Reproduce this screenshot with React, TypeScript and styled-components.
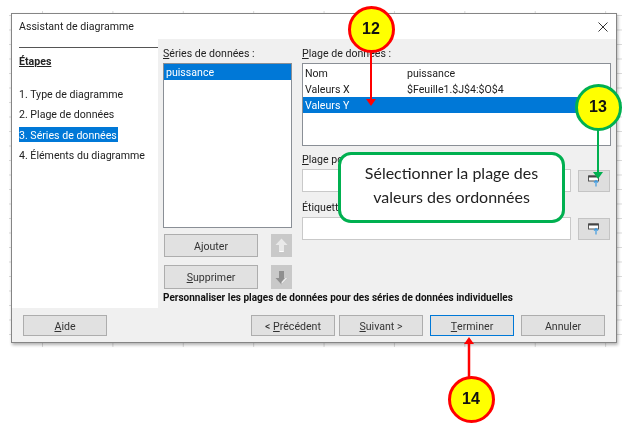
import React from "react";
import styled, { createGlobalStyle } from "styled-components";

const GlobalStyle = createGlobalStyle`
	html, body {
		margin: 0;
		padding: 0;
		background: #fff;
	}
`;

const Page = styled.div`
	position: relative;
	width: 630px;
	height: 427px;
	overflow: hidden;
	background: #fff;
	font-family: Roboto, "Noto Sans", sans-serif;
	font-size: 10.6px;
	color: #222;
	filter: blur(0.35px);
`;

const Sheet = styled.div`
	width: 613px;
	height: 336px;
	margin: 11px 0 0 9px;
	padding: 2px 5px 4px 2px;
	box-sizing: border-box;
	background-color: #fff;
	background-image: linear-gradient(#d9d9d9 1px, transparent 1px), linear-gradient(90deg, #d9d9d9 1px, transparent 1px);
	background-size: 100% 14.5px, 70.4px 100%;
	background-position: 0 4px, 33px 0;
`;

const Dialog = styled.div`
	display: flex;
	flex-direction: column;
	height: 330px;
	box-sizing: border-box;
	border: 1px solid #858585;
	box-shadow: 1px 2px 3px rgba(0, 0, 0, 0.3);
	background: #fff;
`;

const TitleBar = styled.div`
	display: flex;
	align-items: center;
	justify-content: space-between;
	height: 25px;
	padding: 0 8px 0 7px;
	box-sizing: border-box;
	flex: none;
`;

const Body = styled.div`
	display: flex;
	height: 269px;
	flex: none;
`;

const Steps = styled.div`
	width: 146px;
	flex: none;
	padding: 8px 0 0 7px;
	box-sizing: border-box;
	background: #fff;
`;

const StepsTitle = styled.div`
	border-top: 1px solid #555;
	padding-top: 5px;
	height: 27px;
	line-height: 18px;
	font-weight: 700;
	text-decoration: underline;
`;

const Step = styled.div<{ $active?: boolean }>`
	width: fit-content;
	height: 15px;
	line-height: 17px;
	margin-top: 5.5px;
	padding-right: 1px;
	background: ${(p) => (p.$active ? "#0078d7" : "transparent")};
	color: ${(p) => (p.$active ? "#fff" : "#222")};
	&:first-of-type {
		margin-top: 8px;
	}
`;

const Main = styled.div`
	flex: 1;
	padding: 6px 5px 0 5px;
	box-sizing: border-box;
	background: #f0f0f0;
`;

const Columns = styled.div`
	display: grid;
	grid-template-columns: 129px 309px;
	column-gap: 10px;
`;

const Column = styled.div`
	display: flex;
	flex-direction: column;
`;

const FieldLabel = styled.div<{ $gap?: number }>`
	height: 18px;
	line-height: 18px;
	margin-top: ${(p) => p.$gap ?? 0}px;
	white-space: nowrap;
`;

const SeriesList = styled.div`
	height: 165px;
	box-sizing: border-box;
	border: 1px solid #8a8f96;
	background: #fff;
`;

const Row = styled.div<{ $selected?: boolean }>`
	display: flex;
	height: 16px;
	line-height: 18px;
	padding-left: 2px;
	background: ${(p) => (p.$selected ? "#0078d7" : "transparent")};
	color: ${(p) => (p.$selected ? "#fff" : "#222")};
`;

const RangeList = styled.div`
	height: 83px;
	box-sizing: border-box;
	border: 1px solid #8a8f96;
	padding-top: 1px;
	background: #fff;
`;

const NameCell = styled.div`
	width: 102px;
`;

const InputRow = styled.div`
	display: flex;
	align-items: center;
	justify-content: space-between;
	height: 23px;
	padding-right: 1px;
`;

const TextInput = styled.div`
	width: 269px;
	height: 23px;
	box-sizing: border-box;
	border: 1px solid #c9c9c9;
	background: #fff;
`;

const Button = styled.div<{ $width?: number; $focused?: boolean; $lead?: number }>`
	display: flex;
	align-items: center;
	justify-content: center;
	width: ${(p) => p.$width ?? 84}px;
	height: 100%;
	margin-left: ${(p) => p.$lead ?? 0}px;
	padding-top: 1px;
	box-sizing: border-box;
	border: 1px solid ${(p) => (p.$focused ? "#0078d7" : "#adadad")};
	background: #e1e1e1;
	color: #333;
`;

const PickButton = styled(Button)`
	width: 32px;
	height: 22px;
	background: #dedede;
	border-color: #c4c4c4;
`;

const ActionRow = styled.div<{ $height: number; $gap: number }>`
	display: flex;
	justify-content: space-between;
	height: ${(p) => p.$height}px;
	margin-top: ${(p) => p.$gap}px;
	padding-left: 1px;
`;

const MoveButton = styled.div`
	display: flex;
	align-items: center;
	justify-content: center;
	width: 21px;
	height: 100%;
	background: #c9c9c9;
`;

const Hint = styled.div`
	height: 16px;
	line-height: 18px;
	font-size: 10px;
	font-weight: 700;
	color: #111;
	white-space: nowrap;
`;

const Footer = styled.div`
	display: flex;
	justify-content: space-between;
	flex: 1;
	padding: 7px 11px 6px 11px;
	background: #f0f0f0;
`;

const FooterGroup = styled.div`
	display: flex;
	gap: 4px;
`;

const Marker = styled.div<{ $x: number; $y: number; $color: string }>`
	position: absolute;
	left: ${(p) => p.$x - 23.5}px;
	top: ${(p) => p.$y - 23.5}px;
	display: flex;
	align-items: center;
	justify-content: center;
	width: 47px;
	height: 47px;
	box-sizing: border-box;
	border: 3px solid ${(p) => p.$color};
	border-radius: 50%;
	background: #ffff00;
	font-family: "Liberation Sans", Arial, sans-serif;
	font-size: 16px;
	font-weight: 700;
	color: #111;
`;

const Callout = styled.div`
	position: absolute;
	left: 338px;
	top: 152px;
	display: flex;
	align-items: center;
	justify-content: center;
	width: 227px;
	height: 71px;
	padding-bottom: 6px;
	box-sizing: border-box;
	border: 3px solid #00b050;
	border-radius: 13px;
	background: #fff;
	font-family: Lato, "Open Sans", sans-serif;
	font-size: 16px;
	line-height: 24px;
	text-align: center;
	color: #222;
`;

const Arrows = styled.svg`
	position: absolute;
	left: 0;
	top: 0;
`;

const CloseIcon = () => (
	<svg width="10" height="10" viewBox="0 0 10 10">
		<path d="M0.5 0.5 9.5 9.5M9.5 0.5 0.5 9.5" stroke="#333" strokeWidth="1" fill="none" />
	</svg>
);

const UpIcon = () => (
	<svg width="13" height="15" viewBox="0 0 13 15">
		<path d="M6.5 0.5 12.5 7H9V14H4V7H0.5Z" fill="#e9e9e9" />
		<path d="M4.5 13.5H8.5" stroke="#fff" strokeWidth="1" />
	</svg>
);

const DownIcon = () => (
	<svg width="13" height="15" viewBox="0 0 13 15">
		<path d="M6.5 14.5 12.5 8H9V1H4V8H0.5Z" fill="#8f8f8f" />
		<path d="M6.5 14.5 12.5 8H10L6.5 12Z" fill="#e9e9e9" />
	</svg>
);

const PickIcon = () => (
	<svg width="13" height="12" viewBox="0 0 13 12">
		<rect x="0.5" y="1" width="10" height="5" fill="#fff" stroke="#555" strokeWidth="1" />
		<rect x="0.5" y="0.5" width="10" height="2" fill="#444" />
		<path d="M8 11.5V5.5M6 7.5 8 5.5 10 7.5" stroke="#3f9be0" strokeWidth="1.2" fill="none" />
	</svg>
);

const App = () => {
	return (
		<Page>
			<GlobalStyle />
			<Sheet>
				<Dialog>
					<TitleBar>
						<span>Assistant de diagramme</span>
						<CloseIcon />
					</TitleBar>
					<Body>
						<Steps>
							<StepsTitle>Étapes</StepsTitle>
							<Step>1. Type de diagramme</Step>
							<Step>2. Plage de données</Step>
							<Step $active>3. Séries de données</Step>
							<Step>4. Éléments du diagramme</Step>
						</Steps>
						<Main>
							<Columns>
								<Column>
									<FieldLabel><u>S</u>éries de données :</FieldLabel>
									<SeriesList>
										<Row $selected>puissance</Row>
									</SeriesList>
									<ActionRow $height={23} $gap={6}>
										<Button $width={94}>A<u>j</u>outer</Button>
										<MoveButton><UpIcon /></MoveButton>
									</ActionRow>
									<ActionRow $height={24} $gap={8}>
										<Button $width={94}><u>S</u>upprimer</Button>
										<MoveButton><DownIcon /></MoveButton>
									</ActionRow>
								</Column>
								<Column>
									<FieldLabel><u>P</u>lage de données :</FieldLabel>
									<RangeList>
										<Row><NameCell>Nom</NameCell>puissance</Row>
										<Row><NameCell>Valeurs X</NameCell>$Feuille1.$J$4:$O$4</Row>
										<Row $selected><NameCell>Valeurs Y</NameCell></Row>
									</RangeList>
									<FieldLabel $gap={5}><u>P</u>lage po</FieldLabel>
									<InputRow>
										<TextInput />
										<PickButton><PickIcon /></PickButton>
									</InputRow>
									<FieldLabel $gap={7}>Étiquett</FieldLabel>
									<InputRow>
										<TextInput />
										<PickButton><PickIcon /></PickButton>
									</InputRow>
								</Column>
							</Columns>
							<Hint>Personnaliser les plages de données pour des séries de données individuelles</Hint>
						</Main>
					</Body>
					<Footer>
						<Button><u>A</u>ide</Button>
						<FooterGroup>
							<Button>&lt;&nbsp;<u>P</u>récédent</Button>
							<Button><u>S</u>uivant &gt;</Button>
							<Button $focused $lead={3}><u>T</u>erminer</Button>
							<Button $lead={3}>Annuler</Button>
						</FooterGroup>
					</Footer>
				</Dialog>
			</Sheet>
			<Callout>
				<div>Sélectionner la plage des<br />valeurs des ordonnées</div>
			</Callout>
			<Arrows width="630" height="427" viewBox="0 0 630 427">
				<path d="M371 50V100" stroke="#ff0000" strokeWidth="2" fill="none" />
				<path d="M366 99H376L371 106Z" fill="#ff0000" />
				<path d="M598 128V172" stroke="#00b050" strokeWidth="2" fill="none" />
				<path d="M593 172H603L598 179Z" fill="#00b050" />
				<path d="M469 378V343" stroke="#ff0000" strokeWidth="2.5" fill="none" />
				<path d="M464 344H474L469 337Z" fill="#ff0000" />
			</Arrows>
			<Marker $x={371} $y={29} $color="#ff0000">12</Marker>
			<Marker $x={598} $y={107} $color="#00b050">13</Marker>
			<Marker $x={471} $y={399} $color="#ff0000">14</Marker>
		</Page>
	);
};

export default App;
